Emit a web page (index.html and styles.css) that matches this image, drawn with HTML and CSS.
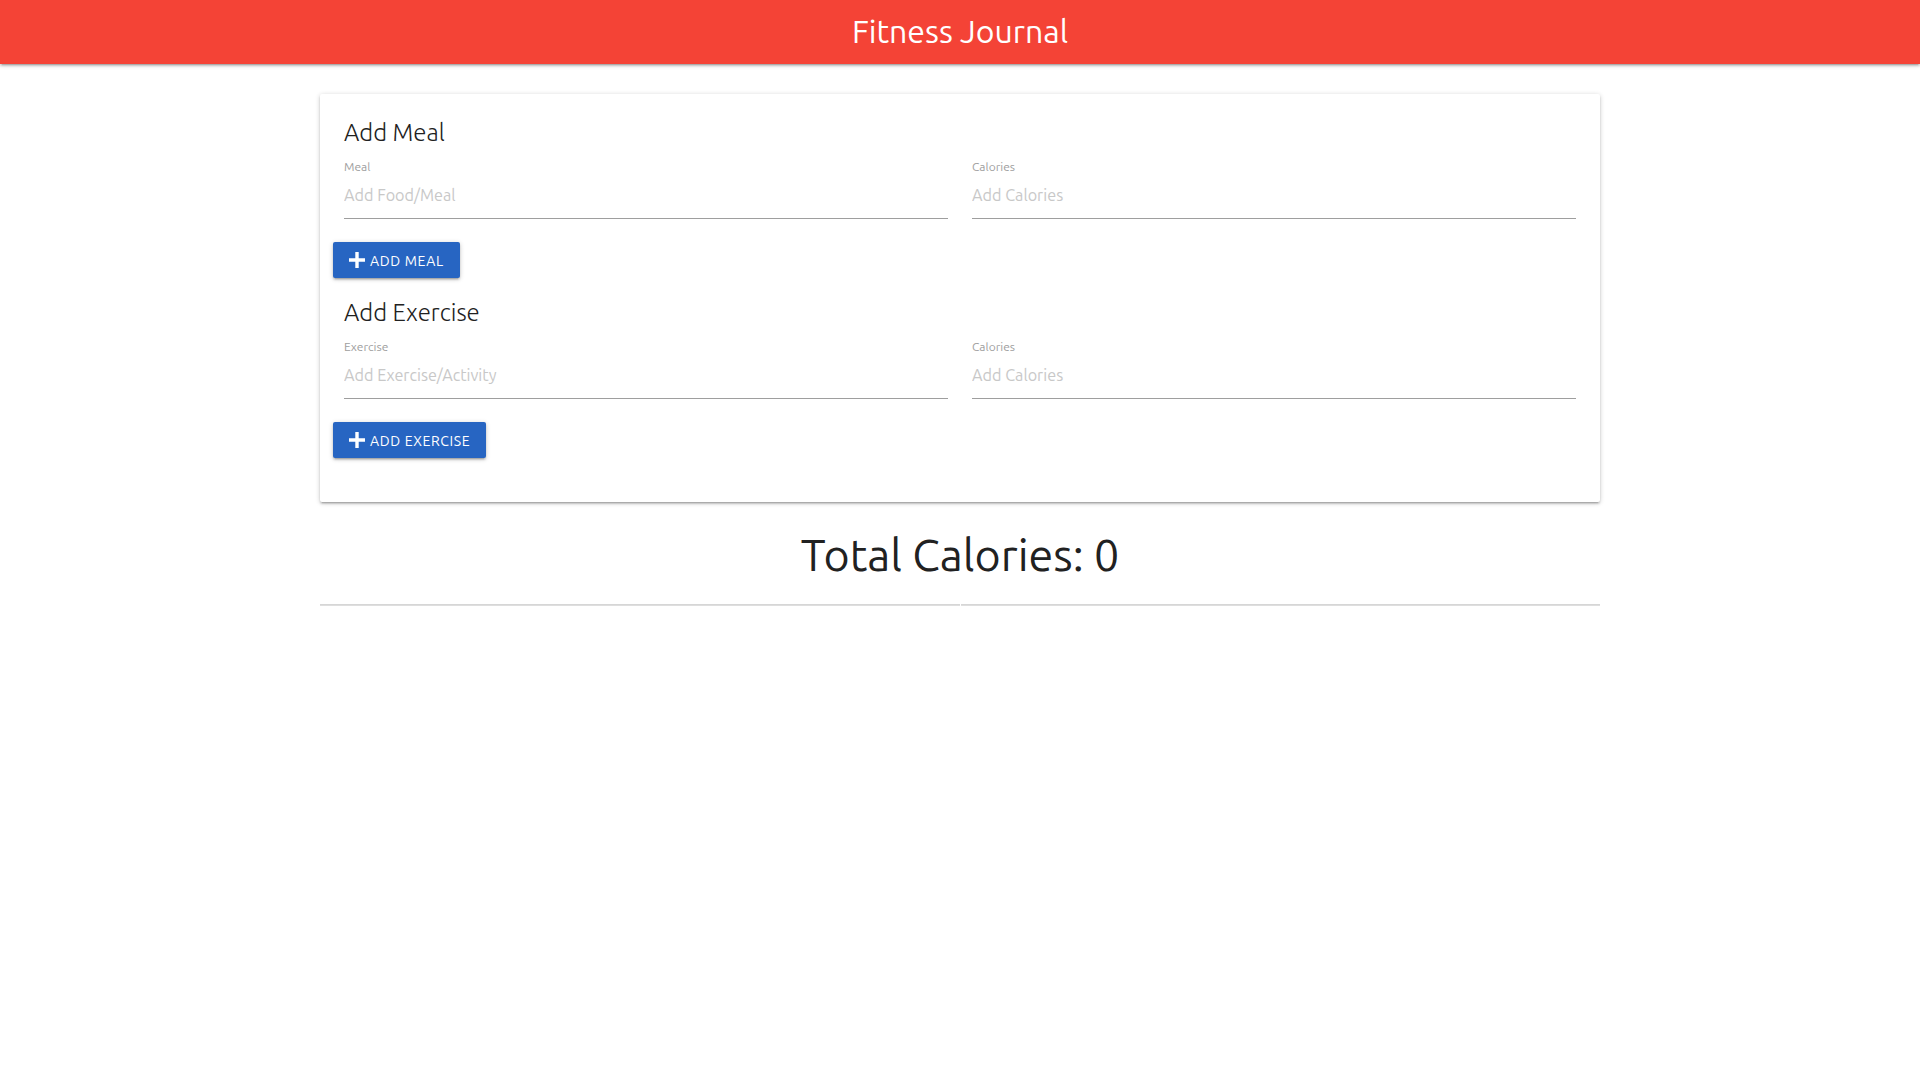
FILE: index.html
```html
<!DOCTYPE html>
<html lang="en">
<head>
<meta charset="utf-8">
<title>Fitness Journal</title>
<link rel="stylesheet" href="styles.css">
</head>
<body>
<nav class="topbar">
  <div class="brand">Fitness Journal</div>
</nav>
<main class="container">
  <section class="card">
    <h5 class="card-title">Add Meal</h5>
    <div class="fields">
      <div class="field">
        <label class="field-label">Meal</label>
        <input class="field-input" type="text" placeholder="Add Food/Meal">
      </div>
      <div class="field">
        <label class="field-label">Calories</label>
        <input class="field-input" type="text" placeholder="Add Calories">
      </div>
    </div>
    <button class="btn" type="button">
      <svg class="btn-icon" viewBox="0 0 16 16" aria-hidden="true"><path d="M8 0V16M0 8H16" stroke="#fff" stroke-width="3.4" fill="none"/></svg>
      <span>Add Meal</span>
    </button>

    <h5 class="card-title second">Add Exercise</h5>
    <div class="fields">
      <div class="field">
        <label class="field-label">Exercise</label>
        <input class="field-input" type="text" placeholder="Add Exercise/Activity">
      </div>
      <div class="field">
        <label class="field-label">Calories</label>
        <input class="field-input" type="text" placeholder="Add Calories">
      </div>
    </div>
    <button class="btn" type="button">
      <svg class="btn-icon" viewBox="0 0 16 16" aria-hidden="true"><path d="M8 0V16M0 8H16" stroke="#fff" stroke-width="3.4" fill="none"/></svg>
      <span>Add Exercise</span>
    </button>
  </section>

  <h3 class="total">Total Calories: 0</h3>
  <div class="divider">
    <span class="divider-half"></span>
    <span class="divider-half"></span>
  </div>
</main>
</body>
</html>
```

FILE: styles.css
```css
* { box-sizing: border-box; }

html, body {
  margin: 0;
  padding: 0;
  background: #ffffff;
  font-family: "Ubuntu", "Lato", "Open Sans", sans-serif;
  color: rgba(0, 0, 0, 0.87);
}

.topbar {
  height: 64px;
  background: #f44336;
  display: flex;
  align-items: flex-start;
  justify-content: center;
  box-shadow: 0 2px 2px 0 rgba(0,0,0,0.14), 0 3px 1px -2px rgba(0,0,0,0.12), 0 1px 5px 0 rgba(0,0,0,0.2);
}

.brand {
  color: #ffffff;
  font-size: 32px;
  line-height: 62px;
  font-weight: 400;
}

.container {
  width: 1280px;
  margin: 30px auto 0;
}

.card {
  background: #fff;
  padding: 24px;
  border-radius: 2px;
  box-shadow: 0 2px 2px 0 rgba(0,0,0,0.14), 0 3px 1px -2px rgba(0,0,0,0.12), 0 1px 5px 0 rgba(0,0,0,0.2);
}

.card-title {
  margin: 0;
  padding-top: 1px;
  font-size: 24px;
  line-height: 28px;
  font-weight: 300;
  color: #212121;
}

.card-title.second {
  margin-top: 20px;
}

.fields {
  display: grid;
  grid-template-columns: 1fr 1fr;
  column-gap: 24px;
  margin-top: 14px;
}

.field {
  display: flex;
  flex-direction: column;
}

.field-label {
  font-size: 12px;
  line-height: 12px;
  color: #9e9e9e;
}

.field-input {
  height: 46px;
  border: none;
  border-bottom: 1px solid #9e9e9e;
  padding: 0 0 2px 0;
  margin: 0;
  font-family: inherit;
  font-size: 16.2px;
  color: #212121;
  background: transparent;
  outline: none;
}

.field-input::placeholder {
  color: #c8c8c8;
}

.btn {
  display: flex;
  align-items: center;
  gap: 5px;
  height: 36px;
  margin: 23px 0 20px -11px;
  padding: 1px 16px 0 16px;
  border: none;
  border-radius: 2px;
  background: #2765c2;
  color: #fff;
  font-family: inherit;
  font-size: 14px;
  letter-spacing: 0.65px;
  text-transform: uppercase;
  box-shadow: 0 2px 2px 0 rgba(0,0,0,0.14), 0 3px 1px -2px rgba(0,0,0,0.12), 0 1px 5px 0 rgba(0,0,0,0.2);
  cursor: pointer;
}

.btn-icon {
  width: 16px;
  height: 16px;
  flex: none;
  margin-top: -1px;
}

.total {
  margin: 26px 0 0;
  text-align: center;
  font-size: 44.8px;
  line-height: 52px;
  font-weight: 400;
  color: #212121;
}

.divider {
  display: flex;
  gap: 1px;
  margin-top: 24px;
}

.divider-half {
  flex: 1;
  height: 2px;
  border-top: 1px solid #d6d6d6;
  border-bottom: 1px solid #dedede;
}
```
